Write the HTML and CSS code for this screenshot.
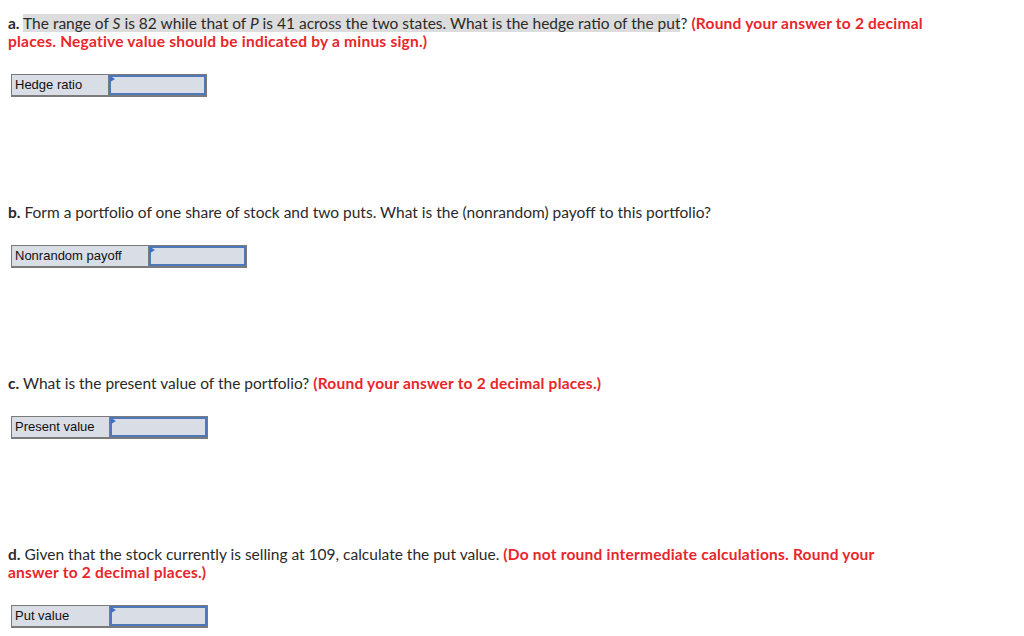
FILE: index.html
```html
<!DOCTYPE html>
<html>
<head>
<meta charset="utf-8">
<link rel="stylesheet" href="styles.css">
</head>
<body>
<div class="page">
  <section class="part part-a">
    <p class="q"><b>a.</b> <span class="hl">The range of <i>S</i> is 82 while that of <i>P</i> is 41 across the two states. What is the hedge ratio of the put</span>? <span class="note">(Round your answer to 2 decimal places. Negative value should be indicated by a minus sign.)</span></p>
    <div class="answer"><div class="label w97">Hedge ratio</div><div class="input"></div></div>
  </section>
  <section class="part">
    <p class="q"><b>b.</b> Form a portfolio of one share of stock and two puts. What is the (nonrandom) payoff to this portfolio?</p>
    <div class="answer"><div class="label w137">Nonrandom payoff</div><div class="input"></div></div>
  </section>
  <section class="part">
    <p class="q"><b>c.</b> What is the present value of the portfolio? <span class="note">(Round your answer to 2 decimal places.)</span></p>
    <div class="answer"><div class="label w98">Present value</div><div class="input"></div></div>
  </section>
  <section class="part">
    <p class="q"><b>d.</b> Given that the stock currently is selling at 109, calculate the put value. <span class="note">(Do not round intermediate calculations. Round your answer to 2 decimal places.)</span></p>
    <div class="answer"><div class="label w98">Put value</div><div class="input"></div></div>
  </section>
</div>
</body>
</html>
```

FILE: styles.css
```css
html, body { margin: 0; padding: 0; background: #fff; }
.page {
  padding: 14px 8px 0 8px;
  display: flex;
  flex-direction: column;
  gap: 106px;
  font-family: Lato, "Liberation Sans", sans-serif;
  color: #2a2a2a;
}
.part { display: flex; flex-direction: column; gap: 24px; }
.q {
  margin: 0;
  font-size: 15.5px;
  line-height: 18px;
  width: 917px;
}
.q b { font-weight: 700; }
.hl { background: #dcdcdc; }
.note { color: #e8262b; font-weight: 700; letter-spacing: 0.22px; }
.answer {
  display: flex;
  margin-left: 3px;
  height: 23px;
  width: max-content;
  border: 1px solid #7a7a7a;
  border-bottom-width: 2px;
  background: #d9dde6;
  box-sizing: border-box;
}
.label {
  font-family: "Liberation Sans", Arial, sans-serif;
  font-size: 13px;
  color: #111;
  line-height: 20px;
  padding-left: 3px;
  border-right: 1px solid #7a7a7a;
  box-sizing: border-box;
}
.w97 { width: 97px; }
.w137 { width: 137px; }
.w98 { width: 98px; }
.input {
  position: relative;
  width: 97px;
  border: 2px solid #4f78b8;
  box-sizing: border-box;
  background: #d9dde6;
}
.input::before {
  content: "";
  position: absolute;
  left: -1px;
  top: -1px;
  border-left: 5px solid #3a6fc4;
  border-top: 3px solid transparent;
  border-bottom: 3px solid transparent;
}
```
